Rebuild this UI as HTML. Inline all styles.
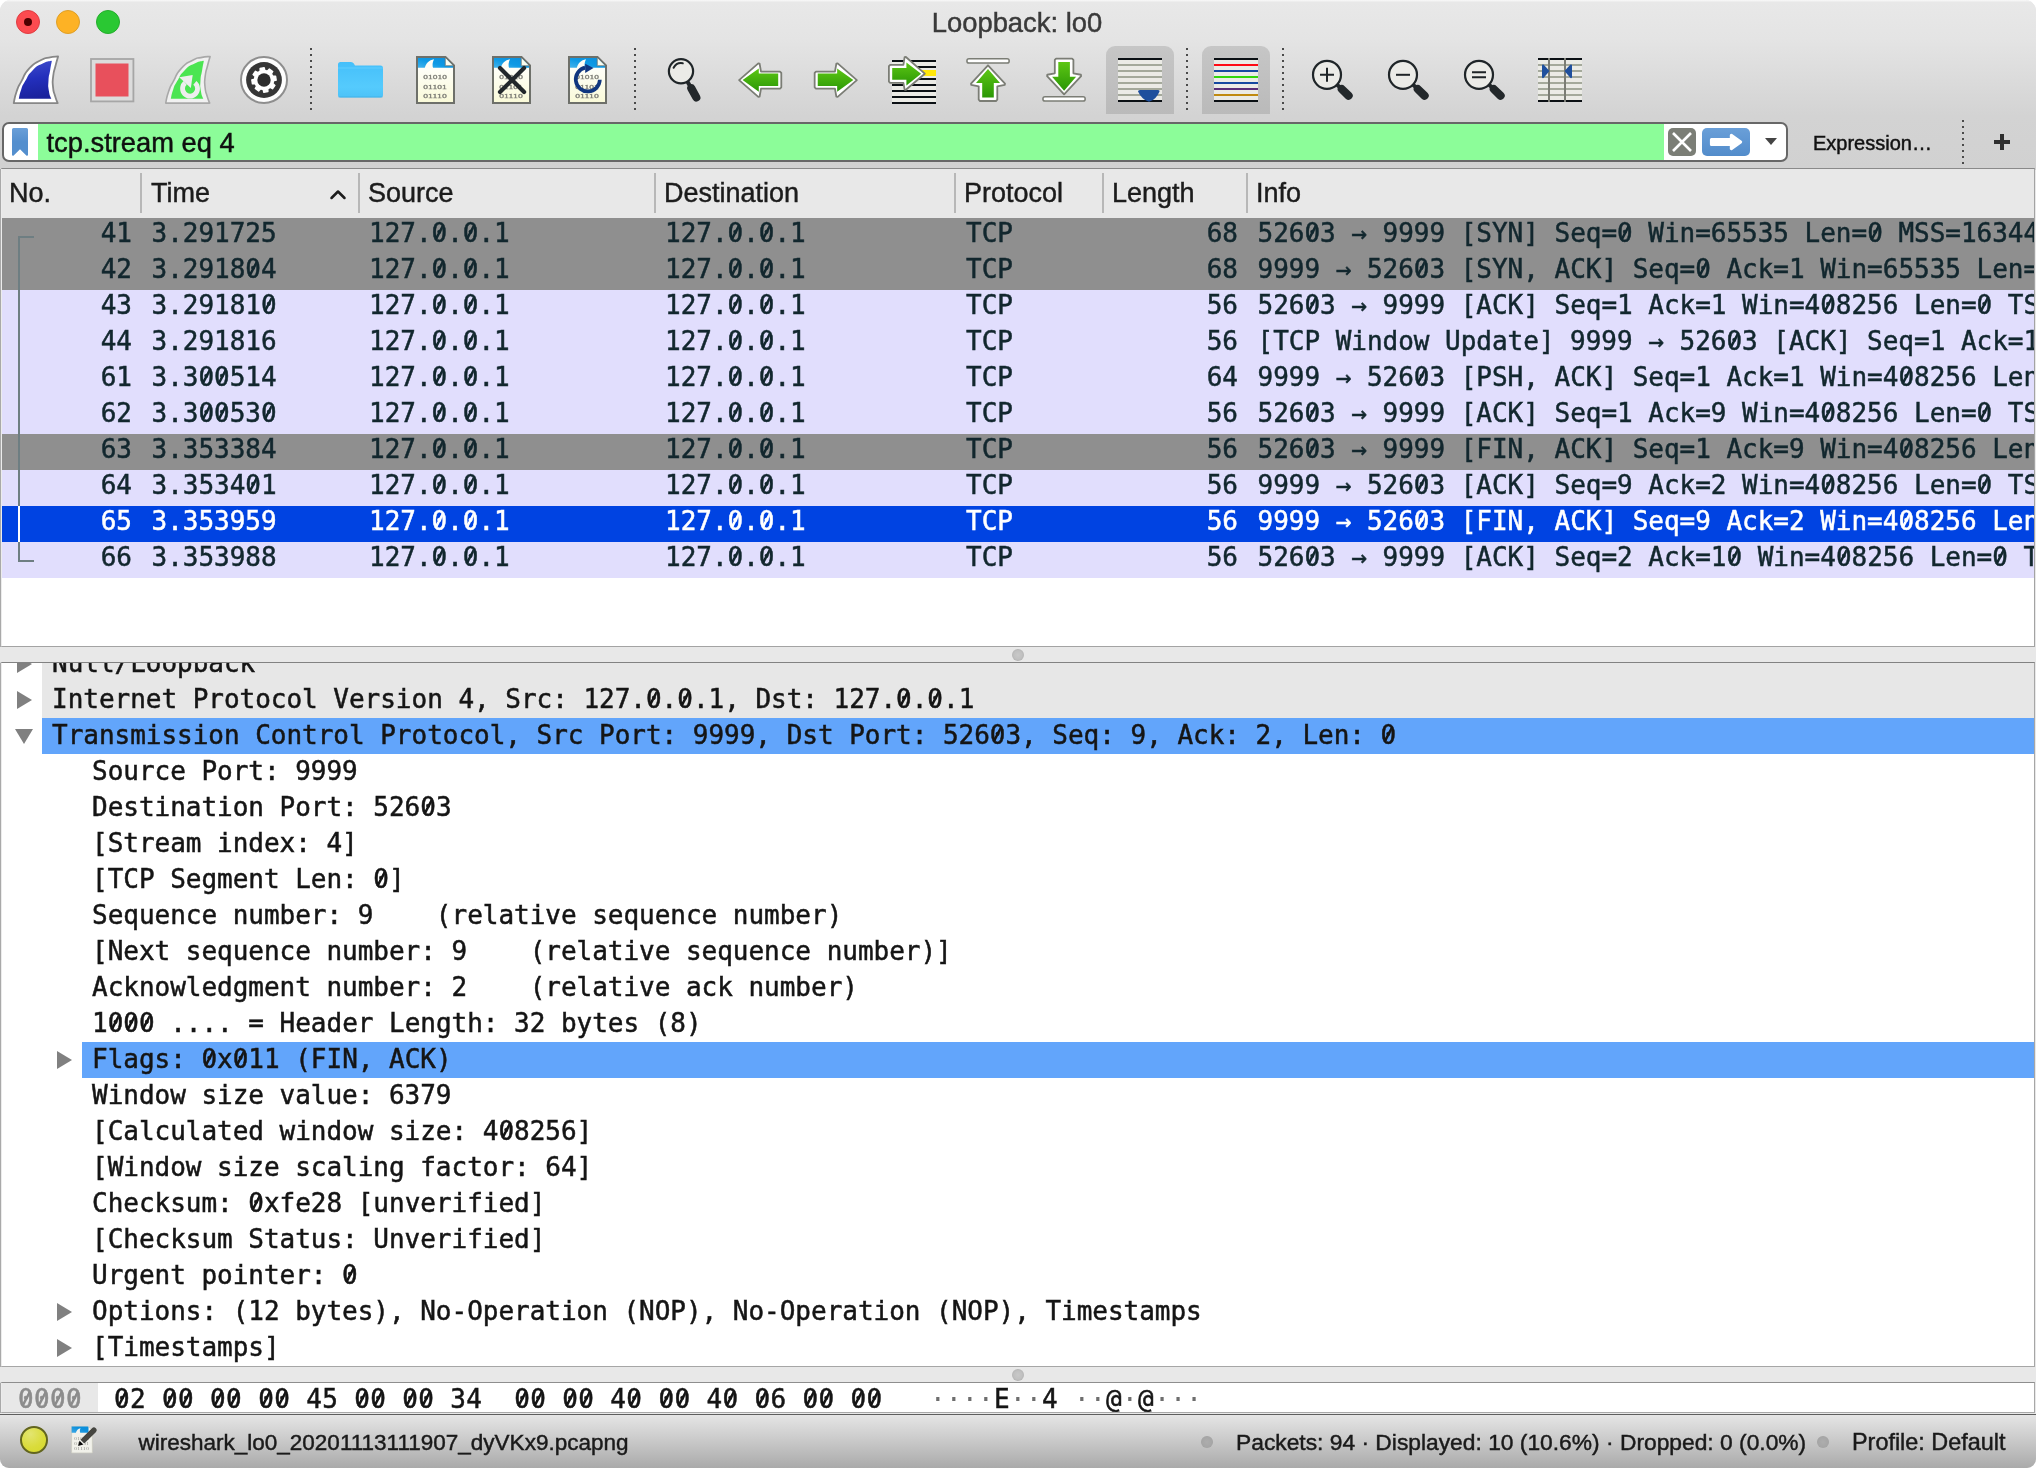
<!DOCTYPE html>
<html lang="en"><head><meta charset="utf-8"><title>Loopback: lo0</title>
<style>
*{box-sizing:border-box;margin:0;padding:0}
html,body{width:2036px;height:1468px;overflow:hidden;background:#fff}
body{font-family:"Liberation Sans",sans-serif;color:#1a1a1a;-webkit-text-stroke:0.450px currentColor}
#win{will-change:transform;position:absolute;left:0;top:0;width:2036px;height:1468px;border-radius:11px 11px 9px 9px;overflow:hidden;background:#e8e8e8}
#chrome{position:absolute;left:0;top:0;width:2036px;height:170px;background:linear-gradient(#fafafa 0px,#f1f1f1 1px,#e8e8e8 2.500px,#e4e4e4 40px,#d3d3d3 116px,#d1d1d1 170px)}
.tl{position:absolute;top:10px;width:24px;height:24px;border-radius:50%}
.tl.r{left:16px;background:#fc4b50;border:1px solid #df3d42}
.tl.r i{position:absolute;left:7px;top:7px;width:8px;height:8px;border-radius:50%;background:#4d0000}
.tl.y{left:56px;background:#fdb225;border:1px solid #de9f27}
.tl.g{left:96px;background:#2ac833;border:1px solid #25ad2d}
#title{position:absolute;left:-1px;top:7px;width:2036px;text-align:center;font-size:27.400px;line-height:32px;color:#3a3a3a}
.ic{position:absolute}
.vsep{position:absolute;width:2px;background:repeating-linear-gradient(to bottom,#4a4a4a 0,#4a4a4a 2px,transparent 2px,transparent 6px)}
.hl{position:absolute;top:46px;width:68px;height:68px;border-radius:9px 9px 0 0;background:linear-gradient(#c6c6c6,#bababa)}
#fbar{position:absolute;left:0;top:0;width:2036px;height:170px}
#fbox{position:absolute;left:2px;top:122px;width:1786px;height:40px;border:2px solid #676767;border-radius:7px;background:#fff;overflow:hidden}
#fgreen{position:absolute;left:34px;top:0;width:1626px;height:36px;background:#8cfd99}
#bm{position:absolute;left:8px;top:4px}
#ftext{position:absolute;left:42.500px;top:1px;font-size:27.300px;line-height:35px;color:#101010}
#fx{position:absolute;left:1664px;top:4px;width:28px;height:28px;border-radius:5px;background:#7b7e76}
#fgo{position:absolute;left:1698px;top:4px;width:48px;height:28px;border-radius:5px;background:linear-gradient(#6a9fd8,#528ccb)}
#fdd{position:absolute;left:1761.200px;top:14px;width:0;height:0;border-left:6.700px solid transparent;border-right:6.700px solid transparent;border-top:7.500px solid #444}
#expr{position:absolute;left:1813px;top:130px;font-size:20px;line-height:26px;color:#111}
#plus{position:absolute;left:1994px;top:134px;width:16px;height:16px}
#plus svg{display:block}
#plist{position:absolute;left:0;top:168px;width:2035px;height:479px;border:1px solid #a3a3a3;border-left:2px solid #ececec;border-top:1px solid #8a8a8a;background:#fff;overflow:hidden}
#phead{position:absolute;left:0;top:0;width:2036px;height:49px;background:#e8e8e8}
.hc{position:absolute;top:8px;font-size:27px;line-height:32px;color:#1c1c1c}
.hs{position:absolute;top:4px;width:2px;height:40px;background:#b7b7b7}
#sortarr{position:absolute;left:327px;top:19px}
.pr{letter-spacing:-0.023px;-webkit-text-stroke:0.500px currentColor;position:absolute;left:0;width:2036px;height:36px;font-family:"DejaVu Sans Mono","Liberation Mono",monospace;font-size:26px;line-height:36px;color:#12272e;white-space:pre}
.pr.g{background:#8f8f8f}
.pr.l{background:#e1defd}
.pr.s{background:#0043e2;color:#fff}
.c{position:absolute;top:-3px}
.no{left:0;width:130px;text-align:right}
.tm{left:149.500px}.sr{left:367px}.ds{left:663px}.pt{left:964px}
.ln{left:1100px;width:136px;text-align:right}
.inf{left:1255.500px}
#brk{position:absolute;left:16px;top:67px;width:16px;height:326px;border-left:2px solid #6e7e82;border-top:2px solid #6e7e82}
#brk2{position:absolute;left:16px;top:391px;width:16px;height:2px;background:#6e7e82}
#brk3{position:absolute;left:16px;top:337px;width:2px;height:36px;background:#fff}
.grip{position:absolute;left:1012px;width:12px;height:12px;border-radius:50%;background:radial-gradient(circle,#c8c8c8 0,#c0c0c0 50%,#a4a4a4 100%)}
#detail{position:absolute;left:0;top:662px;width:2035px;height:705px;border:1px solid #a6a6a6;border-left:2px solid #ececec;border-top:1px solid #828282;background:#fff;overflow:hidden}
#dgray{position:absolute;left:40px;top:0;width:2000px;height:55px;background:#e7e7e7}
.dsel{position:absolute;width:2000px;height:36px;background:#62a5fb}
.dr{margin-top:-1px;letter-spacing:-0.023px;-webkit-text-stroke:0.500px currentColor;position:absolute;height:36px;font-family:"DejaVu Sans Mono","Liberation Mono",monospace;font-size:26px;line-height:36px;color:#151515;white-space:pre}
.ex{position:absolute}
#hex{position:absolute;left:0;top:1382px;width:2035px;height:31px;border:1px solid #a8a8a8;border-left:2px solid #ececec;border-top:1px solid #8e8e8e;background:#fff;overflow:hidden;font-family:"DejaVu Sans Mono","Liberation Mono",monospace;font-size:26px;line-height:32px;white-space:pre;letter-spacing:0.347px;-webkit-text-stroke:0.500px currentColor}
#hoff{position:absolute;left:0;top:0;width:96px;height:29px;background:#e8e8e8}
#hofft{position:absolute;left:16px;top:0px;color:#8c8c8c}
#hbytes{position:absolute;left:112px;top:0px;color:#151515}
#hascii{position:absolute;left:928px;top:0px;color:#151515}
#status{position:absolute;left:0;top:1414px;width:2036px;height:54px;border-top:1px solid #5e5e5e;background:linear-gradient(#e5e5e5,#c8c8c8 50%,#aaaaaa);font-size:22.500px;color:#1a1a1a}
#led{position:absolute;left:20px;top:11px;width:28px;height:28px;border-radius:50%;background:radial-gradient(circle at 35% 25%,#e3e570,#dadc3c 55%,#d6d828);border:2px solid #62651f}
#sedit{position:absolute;left:71px;top:11px}
#sfile{position:absolute;left:138.500px;top:14px;line-height:28px}
#spk{position:absolute;left:1236px;top:13px;line-height:28px;font-size:22.800px}
#sprof{position:absolute;left:1852px;top:13px;line-height:28px;font-size:23.400px}
.sdot{position:absolute;top:21px;width:12px;height:12px;border-radius:50%;background:radial-gradient(circle,#adadad 0,#a6a6a6 60%,#959595 100%)}

.lb{position:absolute;left:0;width:1px;background:#a9a9a9}
.d{color:#6e6e6e;-webkit-text-stroke:0}
.z{font-style:normal;background:linear-gradient(to bottom right,transparent calc(50% - 1.700px),currentColor calc(50% - 0.800px),currentColor calc(50% + 0.800px),transparent calc(50% + 1.700px)) no-repeat;background-size:6.800px 13px;background-position:4.500px 8.200px}

</style></head><body>
<div id="win">
<div id="chrome">
<div class="tl r"><i></i></div><div class="tl y"></div><div class="tl g"></div>
<div id="title">Loopback: lo0</div>
<div class="hl" style="left:1106px"></div><div class="hl" style="left:1202px"></div>
<div class="vsep" style="left:310px;top:48px;height:62px"></div><div class="vsep" style="left:634px;top:48px;height:62px"></div><div class="vsep" style="left:1186px;top:48px;height:62px"></div><div class="vsep" style="left:1282px;top:48px;height:62px"></div>
<svg id="tb" width="2036" height="120" viewBox="0 0 2036 120" style="position:absolute;left:0;top:0">
<defs>
<linearGradient id="gB" x1="0.2" y1="0" x2="0.35" y2="1"><stop offset="0" stop-color="#3e4ccb"/><stop offset="0.5" stop-color="#232fbc"/><stop offset="1" stop-color="#1a219c"/></linearGradient>
<linearGradient id="gG" x1="0" y1="0" x2="0" y2="1"><stop offset="0" stop-color="#5cc614"/><stop offset="1" stop-color="#2b9706"/></linearGradient>
<linearGradient id="gP" x1="0" y1="0" x2="0" y2="1"><stop offset="0" stop-color="#ffffff"/><stop offset="0.3" stop-color="#fefef6"/><stop offset="1" stop-color="#fafad8"/></linearGradient>
<linearGradient id="gT" x1="0" y1="1" x2="1" y2="0"><stop offset="0" stop-color="#44b4ec"/><stop offset="0.45" stop-color="#0f9ae5"/><stop offset="1" stop-color="#0a8edc"/></linearGradient>
<linearGradient id="gF" x1="0" y1="0" x2="0" y2="1"><stop offset="0" stop-color="#45bffa"/><stop offset="0.7" stop-color="#55cbfd"/><stop offset="1" stop-color="#4cc2f8"/></linearGradient>
<filter id="bl" x="-10%" y="-10%" width="120%" height="120%"><feGaussianBlur stdDeviation="0.35"/></filter>
</defs>
<g transform="translate(12,55)"><path d="M1.70 48.10C2.67 44.23 2.00 43.83 4.60 36.50C7.20 29.17 5.27 33.80 9.50 26.10C13.73 18.40 10.90 20.33 17.30 13.40C23.70 6.47 22.17 8.90 28.70 5.30C35.23 1.70 31.10 3.87 36.90 2.60C42.70 1.33 43.03 1.87 46.10 1.50C45.20 4.77 45.03 4.73 43.40 11.30C41.77 17.87 42.00 14.37 41.20 21.20C40.40 28.03 40.40 25.27 41.00 31.80C41.60 38.33 41.43 35.37 43.00 40.80C44.57 46.23 44.80 45.67 45.70 48.10Z" fill="#ffffff" stroke="#878787" stroke-width="1.8" stroke-linejoin="round"/><path d="M6.80 43.80C7.60 40.70 7.07 40.40 9.20 34.50C11.33 28.60 9.43 32.47 13.20 26.10C16.97 19.73 14.67 21.27 20.50 15.40C26.33 9.53 24.23 11.70 30.70 8.50C37.17 5.30 36.83 6.70 39.90 5.80C39.30 9.00 39.23 8.80 38.10 15.40C36.97 22.00 36.90 18.77 36.50 25.60C36.10 32.43 35.97 29.83 36.90 35.90C37.83 41.97 38.50 41.17 39.30 43.80Z" fill="url(#gB)"/></g>
<rect x="91" y="59" width="42.400" height="42.400" fill="#dcdcdc" stroke="#a6a6a6" stroke-width="1.800"/><rect x="95.500" y="63.500" width="33" height="33" fill="#e8505c"/>
<g transform="translate(164,55)"><path d="M1.70 48.10C2.67 44.23 2.00 43.83 4.60 36.50C7.20 29.17 5.27 33.80 9.50 26.10C13.73 18.40 10.90 20.33 17.30 13.40C23.70 6.47 22.17 8.90 28.70 5.30C35.23 1.70 31.10 3.87 36.90 2.60C42.70 1.33 43.03 1.87 46.10 1.50C45.20 4.77 45.03 4.73 43.40 11.30C41.77 17.87 42.00 14.37 41.20 21.20C40.40 28.03 40.40 25.27 41.00 31.80C41.60 38.33 41.43 35.37 43.00 40.80C44.57 46.23 44.80 45.67 45.70 48.10Z" fill="#f1f1f1" stroke="#a8a8a8" stroke-width="1.6" stroke-linejoin="round"/><path d="M6.80 43.80C7.60 40.70 7.07 40.40 9.20 34.50C11.33 28.60 9.43 32.47 13.20 26.10C16.97 19.73 14.67 21.27 20.50 15.40C26.33 9.53 24.23 11.70 30.70 8.50C37.17 5.30 36.83 6.70 39.90 5.80C39.30 9.00 39.23 8.80 38.10 15.40C36.97 22.00 36.90 18.77 36.50 25.60C36.10 32.43 35.97 29.83 36.90 35.90C37.83 41.97 38.50 41.17 39.30 43.80Z" fill="#4be552"/><path d="M30.86 27.87A7.500 7.500 0 1 1 21.22 27.870" fill="none" stroke="#eeeeee" stroke-width="4.800"/><path d="M15.200 22.200L28.700 19.900L26.850 33Z" fill="#eeeeee"/></g>
<circle cx="264" cy="80" r="23" fill="#fdfdfd" stroke="#8e8e8e" stroke-width="2"/><circle cx="264" cy="80" r="17.900" fill="#363636"/><path d="M260.20 71.18L260.08 68.45L264.16 67.80L264.89 70.44L267.55 71.08L269.40 69.06L272.74 71.49L271.39 73.87L272.82 76.20L275.55 76.08L276.20 80.16L273.56 80.89L272.92 83.55L274.94 85.40L272.51 88.74L270.13 87.39L267.80 88.82L267.92 91.55L263.84 92.20L263.11 89.56L260.45 88.92L258.60 90.94L255.26 88.51L256.61 86.13L255.18 83.80L252.45 83.92L251.80 79.84L254.44 79.11L255.08 76.45L253.06 74.60L255.49 71.26L257.87 72.61Z" fill="#fff" stroke="#fff" stroke-width="1.400" stroke-linejoin="round"/><circle cx="264" cy="80" r="6.700" fill="#2d2d2d"/>
<path d="M338 64.500q0-2.500 2.500-2.500h10.500q1.800 0 2.800 1.500l1.200 2h25.500q2.500 0 2.500 2.500v27q0 2.500-2.500 2.500h-40q-2.500 0-2.500-2.500z" fill="url(#gF)"/><path d="M338 68h45" stroke="#6ad3ff" stroke-width="1" opacity="0.700"/><path d="M338.500 97h44" stroke="#3aa9e0" stroke-width="1.200" opacity="0.600"/>
<g transform="translate(416,56)"><path d="M1 1H29.500L38 9.500V47H1Z" fill="url(#gP)" stroke="#6e706a" stroke-width="2" stroke-linejoin="miter"/><path d="M2 2H29.200L37 9.800V11.800H2Z" fill="url(#gT)"/><path d="M8.600 12.500C9.800 7.500 13 4 18 3.200C16.300 6.500 16.200 9.500 17.200 12.500Z" fill="#fdfdf6"/><path d="M29.300 2V9.700H37Z" fill="#fdfdee"/><path d="M29.300 1.500V9.700H37.500" fill="none" stroke="#6e706a" stroke-width="1.300" opacity="0.550"/><g font-family="Liberation Serif,serif" font-size="6.900" fill="#7f7f78" stroke="#7f7f78" stroke-width="0.300" filter="url(#bl)"><text x="7.200" y="23.400" textLength="23.700" lengthAdjust="spacingAndGlyphs">01010</text><text x="7.200" y="32.600" textLength="23.700" lengthAdjust="spacingAndGlyphs">01101</text><text x="7.200" y="41.700" textLength="23.700" lengthAdjust="spacingAndGlyphs">01110</text></g></g>
<g transform="translate(492,56)"><path d="M1 1H29.500L38 9.500V47H1Z" fill="url(#gP)" stroke="#6e706a" stroke-width="2" stroke-linejoin="miter"/><path d="M2 2H29.200L37 9.800V11.800H2Z" fill="url(#gT)"/><path d="M8.600 12.500C9.800 7.500 13 4 18 3.200C16.300 6.500 16.200 9.500 17.200 12.500Z" fill="#fdfdf6"/><path d="M29.300 2V9.700H37Z" fill="#fdfdee"/><path d="M29.300 1.500V9.700H37.500" fill="none" stroke="#6e706a" stroke-width="1.300" opacity="0.550"/><g font-family="Liberation Serif,serif" font-size="6.900" fill="#7f7f78" stroke="#7f7f78" stroke-width="0.300" filter="url(#bl)"><text x="7.200" y="23.400" textLength="23.700" lengthAdjust="spacingAndGlyphs">01010</text><text x="7.200" y="32.600" textLength="23.700" lengthAdjust="spacingAndGlyphs">01101</text><text x="7.200" y="41.700" textLength="23.700" lengthAdjust="spacingAndGlyphs">01110</text></g></g>
<path d="M500 68L524.100 92.100M524.100 68L500 92.100" stroke="#22272b" stroke-width="4.200" stroke-linecap="round"/>
<g transform="translate(568,56)"><path d="M1 1H29.500L38 9.500V47H1Z" fill="url(#gP)" stroke="#6e706a" stroke-width="2" stroke-linejoin="miter"/><path d="M2 2H29.200L37 9.800V11.800H2Z" fill="url(#gT)"/><path d="M8.600 12.500C9.800 7.500 13 4 18 3.200C16.300 6.500 16.200 9.500 17.200 12.500Z" fill="#fdfdf6"/><path d="M29.300 2V9.700H37Z" fill="#fdfdee"/><path d="M29.300 1.500V9.700H37.500" fill="none" stroke="#6e706a" stroke-width="1.300" opacity="0.550"/><g font-family="Liberation Serif,serif" font-size="6.900" fill="#7f7f78" stroke="#7f7f78" stroke-width="0.300" filter="url(#bl)"><text x="7.200" y="23.400" textLength="23.700" lengthAdjust="spacingAndGlyphs">01010</text><text x="7.200" y="32.600" textLength="23.700" lengthAdjust="spacingAndGlyphs">01101</text><text x="7.200" y="41.700" textLength="23.700" lengthAdjust="spacingAndGlyphs">01110</text></g></g>
<path d="M599.850 79.800A12.050 12.050 0 1 1 585.090 67.660" fill="none" stroke="#10367f" stroke-width="3.700"/><path d="M585.200 63.700L593.500 68L585.200 73.100Z" fill="#10367f"/>
<path d="M686.5 80.0L691.3 88.3" stroke="#23282b" stroke-width="4" stroke-linecap="butt"/><path d="M691.3 88.3L696.3 97.4" stroke="#23282b" stroke-width="8.200" stroke-linecap="round"/><circle cx="681" cy="71.25" r="12.1" fill="#ebebe7" stroke="#1f2528" stroke-width="2.200"/><path d="M673.600 67.800A8.600 8.600 0 0 1 682.800 63.200" fill="none" stroke="#1f2528" stroke-width="2" stroke-linecap="round"/>
<path d="M739.10 80.10L758.30 63.40L759.60 63.60L761.00 71.70L780.00 71.70L781.30 73.00L781.30 87.30L780.00 88.60L761.00 88.60L759.60 96.70L758.30 96.90Z" fill="#fff" stroke="#7b7d75" stroke-width="1.800" stroke-linejoin="round"/><path d="M742.60 80.10L758.80 68.60L758.80 73.50L778.20 73.50L778.20 85.90L758.80 85.90L758.80 91.70Z" fill="url(#gG)"/>
<path d="M856.85 80.10L837.65 63.40L836.35 63.60L834.95 71.70L815.95 71.70L814.65 73.00L814.65 87.30L815.95 88.60L834.95 88.60L836.35 96.70L837.65 96.90Z" fill="#fff" stroke="#7b7d75" stroke-width="1.800" stroke-linejoin="round"/><path d="M853.35 80.10L837.15 68.60L837.15 73.50L817.75 73.50L817.75 85.90L837.15 85.90L837.15 91.70Z" fill="url(#gG)"/>
<rect x="892" y="60" width="44" height="44" fill="#ebebe6"/><rect x="892" y="60" width="44" height="2" fill="#0b1014"/><rect x="892" y="66" width="44" height="2" fill="#0b1014"/><rect x="892" y="78" width="44" height="2" fill="#0b1014"/><rect x="892" y="84" width="44" height="2" fill="#0b1014"/><rect x="892" y="90" width="44" height="2" fill="#0b1014"/><rect x="892" y="96" width="44" height="2" fill="#0b1014"/><rect x="892" y="102" width="44" height="2" fill="#0b1014"/><rect x="892" y="70" width="44" height="6" fill="#ffe60a"/>
<path d="M888.90 66.20L890.20 64.90L903.40 64.90L904.60 57.20L905.90 57.00L924.80 73.70L905.90 89.80L904.60 89.60L903.40 82.90L890.20 82.90L888.90 81.60Z" fill="#fff" stroke="#7b7d75" stroke-width="1.800" stroke-linejoin="round"/><path d="M892.20 68.00L906.40 68.00L906.40 62.40L921.10 73.70L906.40 85.60L906.40 79.70L892.20 79.70Z" fill="url(#gG)"/>
<rect x="966.900" y="58.800" width="42.300" height="4.300" rx="2.150" fill="#fff" stroke="#7b7d75" stroke-width="1.500"/>
<path d="M988.00 65.30L1005.00 83.60L1004.80 84.90L997.30 86.30L997.30 99.70L996.00 101.00L980.00 101.00L978.70 99.70L978.70 86.30L971.20 84.90L971.00 83.60Z" fill="#fff" stroke="#7b7d75" stroke-width="1.800" stroke-linejoin="round"/><path d="M988.00 69.00L1000.00 83.00L993.80 83.00L993.80 97.60L982.20 97.60L982.20 83.00L976.00 83.00Z" fill="url(#gG)"/>
<rect x="1042.900" y="96.800" width="42.300" height="4.300" rx="2.150" fill="#fff" stroke="#7b7d75" stroke-width="1.500"/>
<path d="M1064.10 94.35L1081.10 76.05L1080.90 74.75L1073.40 73.35L1073.40 59.95L1072.10 58.65L1056.10 58.65L1054.80 59.95L1054.80 73.35L1047.30 74.75L1047.10 76.05Z" fill="#fff" stroke="#7b7d75" stroke-width="1.800" stroke-linejoin="round"/><path d="M1064.10 90.65L1076.10 76.65L1069.90 76.65L1069.90 62.05L1058.30 62.05L1058.30 76.65L1052.10 76.65Z" fill="url(#gG)"/>
<rect x="1118" y="58" width="44" height="44" fill="#ebebe6"/><rect x="1118" y="58" width="44" height="2" fill="#0b1014"/><rect x="1118" y="100" width="44" height="2" fill="#0b1014"/><rect x="1118" y="64" width="44" height="2" fill="#a4a99b"/><rect x="1118" y="70" width="44" height="2" fill="#a4a99b"/><rect x="1118" y="76" width="44" height="2" fill="#a4a99b"/><rect x="1118" y="82" width="44" height="2" fill="#a4a99b"/><rect x="1118" y="88" width="44" height="2" fill="#a4a99b"/><rect x="1118" y="94" width="44" height="2" fill="#a4a99b"/><path d="M1138 91.500Q1138 90 1140 90H1158Q1160 90 1159.500 91.500Q1156 100 1149 101.800Q1142 100 1138 91.500Z" fill="#1e4f9d"/>
<rect x="1214" y="58" width="44" height="44" fill="#ebebe6"/><rect x="1214" y="58" width="44" height="2" fill="#0b1014"/><rect x="1214" y="64" width="44" height="2" fill="#ff0a14"/><rect x="1214" y="70" width="44" height="2" fill="#1648a0"/><rect x="1214" y="76" width="44" height="2" fill="#32d60a"/><rect x="1214" y="82" width="44" height="2" fill="#1648a0"/><rect x="1214" y="88" width="44" height="2" fill="#5a2d78"/><rect x="1214" y="94" width="44" height="2" fill="#c08a10"/><rect x="1214" y="100" width="44" height="2" fill="#0b1014"/>
<path d="M1335.5 83.3L1341.8 89.1" stroke="#23282b" stroke-width="4" stroke-linecap="butt"/><path d="M1341.8 89.1L1348.6 95.7" stroke="#23282b" stroke-width="8.200" stroke-linecap="round"/><circle cx="1327" cy="74.8" r="14" fill="#ebebe7" stroke="#1f2528" stroke-width="2.200"/><path d="M1320 74.800H1334M1327 67.800V81.800" stroke="#1f2427" stroke-width="2"/>
<path d="M1411.5 83.3L1417.8 89.1" stroke="#23282b" stroke-width="4" stroke-linecap="butt"/><path d="M1417.8 89.1L1424.6 95.7" stroke="#23282b" stroke-width="8.200" stroke-linecap="round"/><circle cx="1403" cy="74.8" r="14" fill="#ebebe7" stroke="#1f2528" stroke-width="2.200"/><path d="M1396 74.800H1410" stroke="#1f2427" stroke-width="2"/>
<path d="M1487.5 83.3L1493.8 89.1" stroke="#23282b" stroke-width="4" stroke-linecap="butt"/><path d="M1493.8 89.1L1500.6 95.7" stroke="#23282b" stroke-width="8.200" stroke-linecap="round"/><circle cx="1479" cy="74.8" r="14" fill="#ebebe7" stroke="#1f2528" stroke-width="2.200"/><path d="M1472 72.300H1486M1472 77.300H1486" stroke="#1f2427" stroke-width="2"/>
<rect x="1538" y="58" width="44" height="44" fill="#ebebe6"/><rect x="1538" y="64" width="44" height="2" fill="#a4a99b"/><rect x="1538" y="70" width="44" height="2" fill="#a4a99b"/><rect x="1538" y="76" width="44" height="2" fill="#a4a99b"/><rect x="1538" y="82" width="44" height="2" fill="#a4a99b"/><rect x="1538" y="88" width="44" height="2" fill="#a4a99b"/><rect x="1538" y="94" width="44" height="2" fill="#a4a99b"/><rect x="1538" y="58" width="44" height="2" fill="#0b1014"/><rect x="1538" y="100" width="44" height="2" fill="#0b1014"/><rect x="1548" y="58" width="2" height="44" fill="#7b7d75"/><rect x="1564" y="58" width="2" height="44" fill="#7b7d75"/><path d="M1542 65.500Q1542 64 1543.500 64.500L1549.500 71L1543.500 78Q1542 78.500 1542 77Z" fill="#1e4f9d"/><path d="M1572 65.500Q1572 64 1570.500 64.500L1564.500 71L1570.500 78Q1572 78.500 1572 77Z" fill="#1e4f9d"/>
</svg>
</div>
<div id="fbar">
<div id="fbox"><div id="fgreen"></div>
<svg id="bm" width="16" height="28" viewBox="0 0 16 28"><defs><linearGradient id="bmg" x1="0" y1="0" x2="0" y2="1"><stop offset="0" stop-color="#6a9fd8"/><stop offset="0.5" stop-color="#548fce"/><stop offset="1" stop-color="#548fce"/></linearGradient></defs><path d="M1.5 0h13a1.5 1.5 0 0 1 1.5 1.500v25.300a1 1 0 0 1-1.700 .7l-6.300-6.300l-6.300 6.300a1 1 0 0 1-1.700-.7v-25.300a1.500 1.500 0 0 1 1.500-1.500z" fill="url(#bmg)"/></svg>
<div id="ftext">tcp.stream eq 4</div>
<div id="fx"><svg width="28" height="28" viewBox="0 0 28 28"><path d="M5 5L23 23M23 5L5 23" stroke="#fff" stroke-width="2.6" fill="none"/></svg></div>
<div id="fgo"><svg width="48" height="28" viewBox="0 0 48 28"><path d="M9.400 11.400H29.300V7.300L38.700 14L29.300 20.700V16.600H9.400Z" fill="#fff" stroke="#fff" stroke-width="3" stroke-linejoin="round"/></svg></div>
<div id="fdd"></div>
</div>
<div id="expr">Expression…</div>
<div class="vsep" style="left:1962px;top:120px;height:44px"></div>
<div id="plus"><svg width="16" height="16" viewBox="0 0 16 16"><path d="M8 0V16M0 8H16" stroke="#2e2e2e" stroke-width="4"/></svg></div>
</div>
<div id="plist">
<div id="phead"><span class="hc" style="left:7px">No.</span><span class="hc" style="left:149px">Time</span><span class="hc" style="left:366px">Source</span><span class="hc" style="left:662px">Destination</span><span class="hc" style="left:962px">Protocol</span><span class="hc" style="left:1110px">Length</span><span class="hc" style="left:1254px">Info</span><i class="hs" style="left:138px"></i><i class="hs" style="left:356px"></i><i class="hs" style="left:652px"></i><i class="hs" style="left:952px"></i><i class="hs" style="left:1100px"></i><i class="hs" style="left:1244px"></i><svg id="sortarr" width="18" height="12" viewBox="0 0 18 12"><path d="M2.500 10L9 3.500L15.500 10" stroke="#1c1c1c" stroke-width="2.500" fill="none" stroke-linecap="round" stroke-linejoin="round"/></svg></div>
<div class="pr g" style="top:49px"><span class="c no">41</span><span class="c tm">3.291725</span><span class="c sr">127.<i class="z">0</i>.<i class="z">0</i>.1</span><span class="c ds">127.<i class="z">0</i>.<i class="z">0</i>.1</span><span class="c pt">TCP</span><span class="c ln">68</span><span class="c inf">526<i class="z">0</i>3 → 9999 [SYN] Seq=<i class="z">0</i> Win=65535 Len=<i class="z">0</i> MSS=16344 WS=64 TSval=1</span></div>
<div class="pr g" style="top:85px"><span class="c no">42</span><span class="c tm">3.2918<i class="z">0</i>4</span><span class="c sr">127.<i class="z">0</i>.<i class="z">0</i>.1</span><span class="c ds">127.<i class="z">0</i>.<i class="z">0</i>.1</span><span class="c pt">TCP</span><span class="c ln">68</span><span class="c inf">9999 → 526<i class="z">0</i>3 [SYN, ACK] Seq=<i class="z">0</i> Ack=1 Win=65535 Len=<i class="z">0</i> MSS=16344</span></div>
<div class="pr l" style="top:121px"><span class="c no">43</span><span class="c tm">3.29181<i class="z">0</i></span><span class="c sr">127.<i class="z">0</i>.<i class="z">0</i>.1</span><span class="c ds">127.<i class="z">0</i>.<i class="z">0</i>.1</span><span class="c pt">TCP</span><span class="c ln">56</span><span class="c inf">526<i class="z">0</i>3 → 9999 [ACK] Seq=1 Ack=1 Win=4<i class="z">0</i>8256 Len=<i class="z">0</i> TSval=1</span></div>
<div class="pr l" style="top:157px"><span class="c no">44</span><span class="c tm">3.291816</span><span class="c sr">127.<i class="z">0</i>.<i class="z">0</i>.1</span><span class="c ds">127.<i class="z">0</i>.<i class="z">0</i>.1</span><span class="c pt">TCP</span><span class="c ln">56</span><span class="c inf">[TCP Window Update] 9999 → 526<i class="z">0</i>3 [ACK] Seq=1 Ack=1 Win=4<i class="z">0</i>8256</span></div>
<div class="pr l" style="top:193px"><span class="c no">61</span><span class="c tm">3.3<i class="z">0</i><i class="z">0</i>514</span><span class="c sr">127.<i class="z">0</i>.<i class="z">0</i>.1</span><span class="c ds">127.<i class="z">0</i>.<i class="z">0</i>.1</span><span class="c pt">TCP</span><span class="c ln">64</span><span class="c inf">9999 → 526<i class="z">0</i>3 [PSH, ACK] Seq=1 Ack=1 Win=4<i class="z">0</i>8256 Len=8 TSval=1</span></div>
<div class="pr l" style="top:229px"><span class="c no">62</span><span class="c tm">3.3<i class="z">0</i><i class="z">0</i>53<i class="z">0</i></span><span class="c sr">127.<i class="z">0</i>.<i class="z">0</i>.1</span><span class="c ds">127.<i class="z">0</i>.<i class="z">0</i>.1</span><span class="c pt">TCP</span><span class="c ln">56</span><span class="c inf">526<i class="z">0</i>3 → 9999 [ACK] Seq=1 Ack=9 Win=4<i class="z">0</i>8256 Len=<i class="z">0</i> TSval=1</span></div>
<div class="pr g" style="top:265px"><span class="c no">63</span><span class="c tm">3.353384</span><span class="c sr">127.<i class="z">0</i>.<i class="z">0</i>.1</span><span class="c ds">127.<i class="z">0</i>.<i class="z">0</i>.1</span><span class="c pt">TCP</span><span class="c ln">56</span><span class="c inf">526<i class="z">0</i>3 → 9999 [FIN, ACK] Seq=1 Ack=9 Win=4<i class="z">0</i>8256 Len=<i class="z">0</i> TSval=1</span></div>
<div class="pr l" style="top:301px"><span class="c no">64</span><span class="c tm">3.3534<i class="z">0</i>1</span><span class="c sr">127.<i class="z">0</i>.<i class="z">0</i>.1</span><span class="c ds">127.<i class="z">0</i>.<i class="z">0</i>.1</span><span class="c pt">TCP</span><span class="c ln">56</span><span class="c inf">9999 → 526<i class="z">0</i>3 [ACK] Seq=9 Ack=2 Win=4<i class="z">0</i>8256 Len=<i class="z">0</i> TSval=1</span></div>
<div class="pr s" style="top:337px"><span class="c no">65</span><span class="c tm">3.353959</span><span class="c sr">127.<i class="z">0</i>.<i class="z">0</i>.1</span><span class="c ds">127.<i class="z">0</i>.<i class="z">0</i>.1</span><span class="c pt">TCP</span><span class="c ln">56</span><span class="c inf">9999 → 526<i class="z">0</i>3 [FIN, ACK] Seq=9 Ack=2 Win=4<i class="z">0</i>8256 Len=<i class="z">0</i> TSval=1</span></div>
<div class="pr l" style="top:373px"><span class="c no">66</span><span class="c tm">3.353988</span><span class="c sr">127.<i class="z">0</i>.<i class="z">0</i>.1</span><span class="c ds">127.<i class="z">0</i>.<i class="z">0</i>.1</span><span class="c pt">TCP</span><span class="c ln">56</span><span class="c inf">526<i class="z">0</i>3 → 9999 [ACK] Seq=2 Ack=1<i class="z">0</i> Win=4<i class="z">0</i>8256 Len=<i class="z">0</i> TSval=1</span></div>
<div id="brk"></div><div id="brk2"></div><div id="brk3"></div></div>
<div class="grip" style="top:649px"></div>
<div id="detail">
<div id="dgray"></div>
<svg class="ex" style="left:15px;top:-8px" width="15" height="18" viewBox="0 0 15 18"><path d="M0 0L15 9L0 18z" fill="#808080"/></svg><div class="dr" style="top:-17px;left:50px">Null/Loopback</div>
<svg class="ex" style="left:15px;top:28px" width="15" height="18" viewBox="0 0 15 18"><path d="M0 0L15 9L0 18z" fill="#808080"/></svg><div class="dr" style="top:19px;left:50px">Internet Protocol Version 4, Src: 127.<i class="z">0</i>.<i class="z">0</i>.1, Dst: 127.<i class="z">0</i>.<i class="z">0</i>.1</div>
<div class="dsel" style="top:55px;left:40px"></div><svg class="ex" style="left:13px;top:66px" width="18" height="15" viewBox="0 0 18 15"><path d="M0 0H18L9 15z" fill="#808080"/></svg><div class="dr" style="top:55px;left:50px">Transmission Control Protocol, Src Port: 9999, Dst Port: 526<i class="z">0</i>3, Seq: 9, Ack: 2, Len: <i class="z">0</i></div>
<div class="dr" style="top:91px;left:90px">Source Port: 9999</div>
<div class="dr" style="top:127px;left:90px">Destination Port: 526<i class="z">0</i>3</div>
<div class="dr" style="top:163px;left:90px">[Stream index: 4]</div>
<div class="dr" style="top:199px;left:90px">[TCP Segment Len: <i class="z">0</i>]</div>
<div class="dr" style="top:235px;left:90px">Sequence number: 9&nbsp;&nbsp;&nbsp;&nbsp;(relative sequence number)</div>
<div class="dr" style="top:271px;left:90px">[Next sequence number: 9&nbsp;&nbsp;&nbsp;&nbsp;(relative sequence number)]</div>
<div class="dr" style="top:307px;left:90px">Acknowledgment number: 2&nbsp;&nbsp;&nbsp;&nbsp;(relative ack number)</div>
<div class="dr" style="top:343px;left:90px">1<i class="z">0</i><i class="z">0</i><i class="z">0</i> .... = Header Length: 32 bytes (8)</div>
<div class="dsel" style="top:379px;left:80px"></div><svg class="ex" style="left:55px;top:388px" width="15" height="18" viewBox="0 0 15 18"><path d="M0 0L15 9L0 18z" fill="#808080"/></svg><div class="dr" style="top:379px;left:90px">Flags: <i class="z">0</i>x<i class="z">0</i>11 (FIN, ACK)</div>
<div class="dr" style="top:415px;left:90px">Window size value: 6379</div>
<div class="dr" style="top:451px;left:90px">[Calculated window size: 4<i class="z">0</i>8256]</div>
<div class="dr" style="top:487px;left:90px">[Window size scaling factor: 64]</div>
<div class="dr" style="top:523px;left:90px">Checksum: <i class="z">0</i>xfe28 [unverified]</div>
<div class="dr" style="top:559px;left:90px">[Checksum Status: Unverified]</div>
<div class="dr" style="top:595px;left:90px">Urgent pointer: <i class="z">0</i></div>
<svg class="ex" style="left:55px;top:640px" width="15" height="18" viewBox="0 0 15 18"><path d="M0 0L15 9L0 18z" fill="#808080"/></svg><div class="dr" style="top:631px;left:90px">Options: (12 bytes), No-Operation (NOP), No-Operation (NOP), Timestamps</div>
<svg class="ex" style="left:55px;top:676px" width="15" height="18" viewBox="0 0 15 18"><path d="M0 0L15 9L0 18z" fill="#808080"/></svg><div class="dr" style="top:667px;left:90px">[Timestamps]</div>
</div>
<div class="grip" style="top:1369px"></div>
<div id="hex"><div id="hoff"></div><span id="hofft"><i class="z">0</i><i class="z">0</i><i class="z">0</i><i class="z">0</i></span><span id="hbytes"><i class="z">0</i>2 <i class="z">0</i><i class="z">0</i> <i class="z">0</i><i class="z">0</i> <i class="z">0</i><i class="z">0</i> 45 <i class="z">0</i><i class="z">0</i> <i class="z">0</i><i class="z">0</i> 34&nbsp; <i class="z">0</i><i class="z">0</i> <i class="z">0</i><i class="z">0</i> 4<i class="z">0</i> <i class="z">0</i><i class="z">0</i> 4<i class="z">0</i> <i class="z">0</i>6 <i class="z">0</i><i class="z">0</i> <i class="z">0</i><i class="z">0</i></span><span id="hascii"><span class="d">····</span>E<span class="d">··</span>4 <span class="d">··</span>@<span class="d">·</span>@<span class="d">···</span></span></div>
<div id="status">
<div id="led"></div>
<svg id="sedit" width="30" height="30" viewBox="0 0 30 30">
<defs><linearGradient id="seb" x1="0" y1="1" x2="1" y2="0"><stop offset="0" stop-color="#3fa9e4"/><stop offset="0.6" stop-color="#0c8fdc"/></linearGradient></defs>
<path d="M0.600 0.400H17.500L21.400 4.300V27H0.600Z" fill="#f1f1ea" stroke="#c9c9c0" stroke-width="0.800"/>
<path d="M0.600 0.400H16.500Q17.500 0.400 17.500 1.400V6.800H0.600Z" fill="url(#seb)"/>
<path d="M4.800 7.200C5.500 4.300 7 2.600 9.600 2.200C8.600 4 8.700 5.600 9.400 7.200Z" fill="#f4f4ee"/>
<g font-family="Liberation Serif,serif" font-size="5" fill="#9a9a94" filter="url(#bl)"><text x="3" y="13.500" textLength="15" lengthAdjust="spacingAndGlyphs">01010</text><text x="3" y="19" textLength="15" lengthAdjust="spacingAndGlyphs">01101</text><text x="3" y="24.400" textLength="15" lengthAdjust="spacingAndGlyphs">01110</text></g>
<path d="M22.900 4.200L11.300 15.600" stroke="#454540" stroke-width="5.400" stroke-linecap="round"/>
<path d="M9.300 13.500L13.500 17.700L11.900 19.200L7.700 15.100Z" fill="#f4f4ee"/>
<path d="M8.600 14.700L12.300 18.400L7.100 19.900Z" fill="#0a0a0a"/>
</svg>
<div id="sfile">wireshark_lo0_20201113111907_dyVKx9.pcapng</div>
<div class="sdot" style="left:1201px"></div>
<div id="spk">Packets: 94 · Displayed: 10 (10.6%) · Dropped: 0 (0.0%)</div>
<div class="sdot" style="left:1817px"></div>
<div id="sprof">Profile: Default</div>
</div>
<div class="lb" style="top:169px;height:478px"></div><div class="lb" style="top:663px;height:704px"></div><div class="lb" style="top:1383px;height:30px"></div>
</div>
</body></html>
